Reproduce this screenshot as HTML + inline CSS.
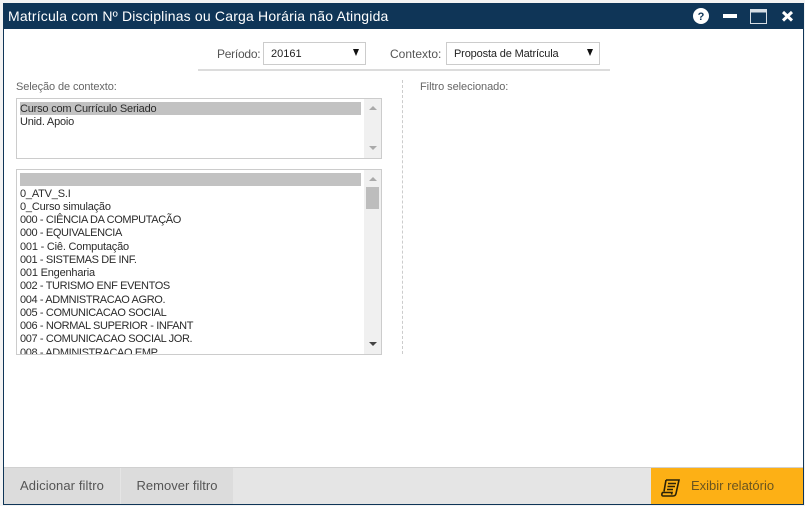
<!DOCTYPE html>
<html><head><meta charset="utf-8">
<style>
html,body{margin:0;padding:0;width:805px;height:506px;overflow:hidden;background:#f3f3f3;font-family:"Liberation Sans",sans-serif}
div{position:absolute;box-sizing:border-box}
.t{white-space:nowrap;font-size:12px;color:#555}
.sel{background:#fff;border:1px solid #ccc;height:23px;top:42px;font-size:11px;color:#222;line-height:22px;white-space:nowrap}
.box{left:16px;width:366px;background:#fff;border:1px solid #ccc;overflow:hidden}
.sb{left:347px;top:0;bottom:0;width:17px;background:#f0f0f0}
.row{left:3px;font-size:11px;height:13.25px;line-height:13.25px;color:#2b2b2b;white-space:pre}
.c{letter-spacing:-.37px}
.m{letter-spacing:-.2px}
.hl{left:3px;width:341px;height:13px;background:#c2c2c2}
.up,.dn{width:0;height:0;border-left:4px solid transparent;border-right:4px solid transparent;left:5px}
.up{border-bottom:4px solid #aaa}
.dn{border-top:4px solid #aaa}
.foot{font-size:13px;color:#555;line-height:36px;text-align:center;white-space:nowrap}
</style></head><body>
<div style="left:3px;top:3px;width:801px;height:502px;background:#fff;border:solid #0f3557;border-width:0 1px 1px 1px"></div>
<div style="left:3px;top:3px;width:801px;height:26px;background:#0f3557"></div>
<div style="left:8px;top:6px;color:#fff;font-size:14px;line-height:20px;white-space:nowrap;letter-spacing:.18px">Matrícula com Nº Disciplinas ou Carga Horária não Atingida</div>
<svg style="position:absolute;left:685px;top:0" width="120" height="35" viewBox="0 0 120 35">
<circle cx="16" cy="16" r="8" fill="#fff"/>
<text x="16" y="20" font-family="Liberation Sans" font-size="11" font-weight="bold" fill="#0f3557" text-anchor="middle">?</text>
<rect x="38" y="14" width="14" height="4" fill="#fff"/>
<rect x="65.500" y="9.500" width="16" height="14" fill="none" stroke="#d5dde4" stroke-width="1"/>
<rect x="65" y="9" width="17" height="3.500" fill="#d5dde4"/>
<path d="M98 12l9 8.500M107 12l-9 8.500" stroke="#fff" stroke-width="3" fill="none"/>
</svg>

<div class="t" style="left:217px;top:47px;letter-spacing:-.25px">Período:</div>
<div class="sel" style="left:263px;width:103px;padding-left:7px">20161</div>
<div style="left:353px;top:49px;width:0;height:0;border-left:3.500px solid transparent;border-right:3.500px solid transparent;border-top:7px solid #111"></div>
<div class="t" style="left:390px;top:47px">Contexto:</div>
<div class="sel" style="left:446px;width:154px;padding-left:7px;letter-spacing:-.15px">Proposta de Matrícula</div>
<div style="left:587px;top:49px;width:0;height:0;border-left:3.500px solid transparent;border-right:3.500px solid transparent;border-top:7px solid #111"></div>
<div style="left:198px;top:69px;width:412px;height:2px;background:#dcdcdc"></div>

<div class="t" style="left:16px;top:81px;font-size:11px;color:#666;letter-spacing:-.1px">Seleção de contexto:</div>
<div class="t" style="left:420px;top:81px;font-size:11px;color:#666;letter-spacing:-.05px">Filtro selecionado:</div>
<div style="left:402px;top:80px;height:274px;width:0;border-left:1px dashed #ccc"></div>

<div class="box" style="top:98px;height:61px">
<div class="hl" style="top:3px"></div>
<div class="row m" style="top:4px">Curso com Currículo Seriado</div>
<div class="row m" style="top:17.250px">Unid. Apoio</div>
<div class="sb"><div class="up" style="top:7px"></div><div class="dn" style="top:47px"></div></div>
</div>

<div class="box" style="top:169px;height:186px">
<div class="hl" style="top:3px"></div>
<div class="row m" style="top:17.500px">0_ATV_S.I</div>
<div class="row m" style="top:30.750px">0_Curso simulação</div>
<div class="row c" style="top:44px">000 - CIÊNCIA DA COMPUTAÇÃO</div>
<div class="row c" style="top:57.250px">000 - EQUIVALENCIA</div>
<div class="row m" style="top:70.500px">001 - Ciê. Computação</div>
<div class="row c" style="top:83.750px">001 - SISTEMAS DE INF.</div>
<div class="row m" style="top:97px">001 Engenharia</div>
<div class="row c" style="top:110.250px">002 - TURISMO ENF EVENTOS</div>
<div class="row c" style="top:123.500px">004 - ADMNISTRACAO AGRO.</div>
<div class="row c" style="top:136.750px">005 - COMUNICACAO SOCIAL</div>
<div class="row c" style="top:150px">006 - NORMAL SUPERIOR - INFANT</div>
<div class="row c" style="top:163.250px">007 - COMUNICACAO SOCIAL JOR.</div>
<div class="row c" style="top:176.500px">008 - ADMINISTRACAO EMP.</div>
<div class="sb"><div class="up" style="top:7px"></div><div style="left:2px;top:17px;width:13px;height:22px;background:#bdbdbd"></div><div class="dn" style="top:172px;border-top-color:#444"></div></div>
</div>

<div style="left:4px;top:467px;width:799px;height:37px;background:#e5e5e5;border-top:1px solid #d0d0d0"></div>
<div class="foot" style="left:4px;top:468px;width:116px;background:#dcdcdc;height:36px;letter-spacing:.1px">Adicionar filtro</div>
<div class="foot" style="left:121px;top:468px;width:112px;background:#dcdcdc;height:36px">Remover filtro</div>
<div style="left:651px;top:468px;width:152px;height:36px;background:#fdb015"></div>
<div class="foot" style="left:691px;top:468px;color:#6a5520">Exibir relatório</div>
<svg style="position:absolute;left:661px;top:479px" width="19" height="18" viewBox="0 0 19 18">
<path d="M5 1H18L15 14.500Q14.500 17 12 17H2Q0.500 17 1 14.500L1.500 13.500H11L10.500 15.500" fill="none" stroke="#2a2208" stroke-width="1.600"/>
<path d="M5 1L3 12.500" stroke="#2a2208" stroke-width="1.600" fill="none"/>
<path d="M7 4.500h8M6.500 7.500h7.500M6 10.500h6" stroke="#2a2208" stroke-width="1.500" fill="none"/>
</svg>
</body></html>
